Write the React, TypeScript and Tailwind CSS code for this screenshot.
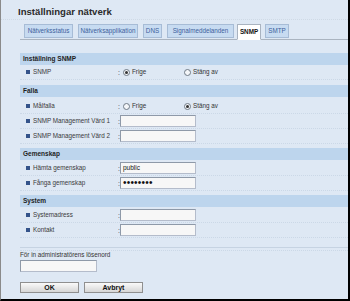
import React from "react";

const Bullet = () => <span className="inline-block w-[4px] h-[4px] bg-[#34538a] mr-[3px] shrink-0" />;

const Radio = ({ checked }: { checked?: boolean }) => (
  <span className="inline-flex items-center justify-center w-[7px] h-[7px] rounded-full border border-[#6f7a86] bg-[#f4f6f9] mr-[2px] shrink-0">
    {checked && <span className="w-[3px] h-[3px] rounded-full bg-[#333]" />}
  </span>
);

const Input = ({ children }: { children?: React.ReactNode }) => (
  <div className="w-[76px] h-[12px] bg-[#f7f7f7] border border-[#b4bccb] border-t-[#8e99a8] border-l-[#8e99a8] flex items-center pl-[2px] text-[6.5px] text-[#111]">
    {children}
  </div>
);

const Row = ({ label, children }: { label: string; children?: React.ReactNode }) => (
  <div className="h-[15px] flex items-center border-b border-dotted border-[#cbd8e7]">
    <div className="w-[98px] flex items-center pl-[6px] text-[6.3px] text-[#3a3a3a] whitespace-nowrap">
      <Bullet />
      <span>{label}</span>
    </div>
    <span className="w-[2px] text-[7px] text-[#333] leading-none">:</span>
    <div className="flex items-center text-[6.3px] text-[#333]">{children}</div>
  </div>
);

const Header = ({ title }: { title: string }) => (
  <div className="h-[12px] bg-[#bdd5ed] flex items-center pl-[3px] text-[6.5px] font-bold text-[#1e1e1e]">
    {title}
  </div>
);

const Tab = ({ label, w, active }: { label: string; w: string; active?: boolean }) =>
  active ? (
    <div className={`${w} h-[16px] -mb-px flex items-center justify-center bg-white border border-[#a9b3c0] border-b-white text-[6.3px] font-bold text-[#111] whitespace-nowrap`}>
      {label}
    </div>
  ) : (
    <div className={`${w} h-[14px] mb-px flex items-center justify-center bg-[#c7dbf1] border border-[#a7bcd6] text-[6.3px] text-[#3d5f9c] whitespace-nowrap`}>
      {label}
    </div>
  );

export default function App() {
  return (
    <div className="w-[350px] h-[301px] bg-[#dee8f4] border-l border-l-[#8a8a8a] border-r-2 border-r-black border-b-2 border-b-black overflow-hidden font-['Liberation_Sans',Arial,sans-serif]">
      <div className="h-[20px] pl-[17px] pt-[5px] text-[9.6px] font-bold text-[#2b2b2b] border-b border-dotted border-[#cfdae6]">
        Inställningar nätverk
      </div>
      <div className="ml-[19px] mt-[4px] h-[16px] flex items-end pl-[4px] border-b border-[#aab4c0]">
        <Tab label="Nätverksstatus" w="w-[49px]" />
        <div className="w-[5px]" />
        <Tab label="Nätverksapplikation" w="w-[60px]" />
        <div className="w-[5px]" />
        <Tab label="DNS" w="w-[19px]" />
        <div className="w-[5px]" />
        <Tab label="Signalmeddelanden" w="w-[67px]" />
        <div className="w-[3px]" />
        <Tab label="SNMP" w="w-[24px]" active />
        <div className="w-[4px]" />
        <Tab label="SMTP" w="w-[24px]" />
      </div>
      <div className="ml-[19px] mt-[13px] flex flex-col">
        <Header title="Inställning SNMP" />
        <Row label="SNMP">
          <span className="w-[3px]" />
          <Radio checked />
          <span className="w-[52px]">Frige</span>
          <Radio />
          <span>Stäng av</span>
        </Row>
        <div className="h-[5px]" />
        <Header title="Falla" />
        <div className="h-[2px]" />
        <Row label="Målfalla">
          <span className="w-[3px]" />
          <Radio />
          <span className="w-[52px]">Frige</span>
          <Radio checked />
          <span>Stäng av</span>
        </Row>
        <Row label="SNMP Management Värd 1">
          <Input />
        </Row>
        <Row label="SNMP Management Värd 2">
          <Input />
        </Row>
        <div className="h-[4px]" />
        <Header title="Gemenskap" />
        <div className="h-[1px]" />
        <Row label="Hämta gemenskap">
          <Input>public</Input>
        </Row>
        <Row label="Fånga gemenskap">
          <Input>
            <span className="text-[10px] leading-none tracking-[0.2px]">••••••••</span>
          </Input>
        </Row>
        <div className="h-[4px]" />
        <Header title="System" />
        <div className="h-[1px]" />
        <Row label="Systemadress">
          <Input />
        </Row>
        <Row label="Kontakt">
          <Input />
        </Row>
        <div className="h-[10px] border-b border-[#c6d3e2]" />
        <div className="h-[3px] border-b border-dotted border-[#cbd8e7]" />
        <div className="text-[6.3px] text-[#333] leading-[8px]">För in administratörens lösenord</div>
        <div className="mt-[1px] w-[77px] h-[12px] bg-[#f7f7f7] border border-[#b4bccb] border-t-[#8e99a8] border-l-[#8e99a8]" />
        <div className="mt-[10px] flex gap-[5px]">
          <button className="w-[59px] h-[11px] bg-gradient-to-b from-[#fafafa] to-[#d6d6d6] border border-[#8f8f8f] text-[7px] font-bold text-[#111] leading-none">
            OK
          </button>
          <button className="w-[59px] h-[11px] bg-gradient-to-b from-[#fafafa] to-[#d6d6d6] border border-[#8f8f8f] text-[7px] font-bold text-[#111] leading-none">
            Avbryt
          </button>
        </div>
      </div>
    </div>
  );
}
